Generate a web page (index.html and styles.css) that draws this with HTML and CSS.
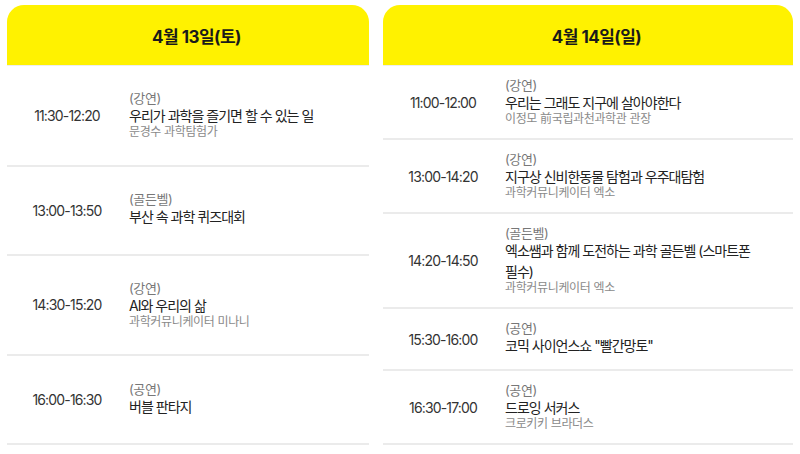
FILE: index.html
```html
<!DOCTYPE html>
<html lang="ko">
<head>
<meta charset="utf-8">
<link rel="stylesheet" href="styles.css">
</head>
<body>
<div class="schedule">
  <section class="day day-sat">
    <h2 class="day-head">4월 13일(토)</h2>
    <div class="rows">
      <div class="row">
        <div class="time">11:30-12:20</div>
        <div class="info">
          <div class="kind">(강연)</div>
          <div class="title">우리가 과학을 즐기면 할 수 있는 일</div>
          <div class="who">문경수 과학탐험가</div>
        </div>
      </div>
      <div class="row">
        <div class="time">13:00-13:50</div>
        <div class="info">
          <div class="kind">(골든벨)</div>
          <div class="title">부산 속 과학 퀴즈대회</div>
        </div>
      </div>
      <div class="row">
        <div class="time">14:30-15:20</div>
        <div class="info">
          <div class="kind">(강연)</div>
          <div class="title">AI와 우리의 삶</div>
          <div class="who">과학커뮤니케이터 미나니</div>
        </div>
      </div>
      <div class="row">
        <div class="time">16:00-16:30</div>
        <div class="info">
          <div class="kind">(공연)</div>
          <div class="title">버블 판타지</div>
        </div>
      </div>
    </div>
  </section>
  <section class="day day-sun">
    <h2 class="day-head">4월 14일(일)</h2>
    <div class="rows">
      <div class="row">
        <div class="time">11:00-12:00</div>
        <div class="info">
          <div class="kind">(강연)</div>
          <div class="title">우리는 그래도 지구에 살아야한다</div>
          <div class="who">이정모 前국립과천과학관 관장</div>
        </div>
      </div>
      <div class="row">
        <div class="time">13:00-14:20</div>
        <div class="info">
          <div class="kind">(강연)</div>
          <div class="title">지구상 신비한동물 탐험과 우주대탐험</div>
          <div class="who">과학커뮤니케이터 엑소</div>
        </div>
      </div>
      <div class="row">
        <div class="time">14:20-14:50</div>
        <div class="info">
          <div class="kind">(골든벨)</div>
          <div class="title">엑소쌤과 함께 도전하는 과학 골든벨 (스마트폰 필수)</div>
          <div class="who">과학커뮤니케이터 엑소</div>
        </div>
      </div>
      <div class="row">
        <div class="time">15:30-16:00</div>
        <div class="info">
          <div class="kind">(공연)</div>
          <div class="title">코믹 사이언스쇼 "빨간망토"</div>
        </div>
      </div>
      <div class="row">
        <div class="time">16:30-17:00</div>
        <div class="info">
          <div class="kind">(공연)</div>
          <div class="title">드로잉 서커스</div>
          <div class="who">크로키키 브라더스</div>
        </div>
      </div>
    </div>
  </section>
</div>
</body>
</html>
```
FILE: styles.css
```css
* { box-sizing: border-box; }
html, body { margin: 0; background: #fff; }
body {
  padding: 5px 7px 0;
  font-family: Inter, "Noto Sans CJK KR", sans-serif;
  color: #222;
}
.schedule {
  display: grid;
  grid-template-columns: 362px 410px;
  column-gap: 14px;
  align-items: stretch;
}
.day {
  display: flex;
  flex-direction: column;
}
.day-head {
  margin: 0;
  height: 60px;
  display: flex;
  align-items: center;
  justify-content: center;
  padding-left: 17px;
  background: #fff200;
  border-radius: 17px 17px 0 0;
  font-size: 17px;
  font-weight: 700;
  letter-spacing: -0.03em;
  color: #1a1a1a;
}
.rows {
  flex: 1;
  display: flex;
  flex-direction: column;
  border-top: 1px solid #eeeeee;
}
.row {
  flex: 1 0 auto;
  display: grid;
  grid-template-columns: 120px 1fr;
  column-gap: 2px;
  align-items: center;
  padding: 13px 0;
  border-bottom: 2px solid #ebebeb;
}
.day-sun .row { flex: 0 0 auto; }
.time {
  text-align: center;
  font-size: 14px;
  letter-spacing: -0.06em;
  color: #333;
}
.info { display: flex; flex-direction: column; }
.kind {
  font-size: 13px;
  line-height: 13px;
  color: #777;
  letter-spacing: -0.03em;
}
.title {
  font-size: 14px;
  line-height: 21px;
  color: #222;
  letter-spacing: -0.07em;
  padding-right: 30px;
}
.who {
  font-size: 12px;
  line-height: 12px;
  color: #8a8a8a;
  letter-spacing: -0.03em;
}
```
